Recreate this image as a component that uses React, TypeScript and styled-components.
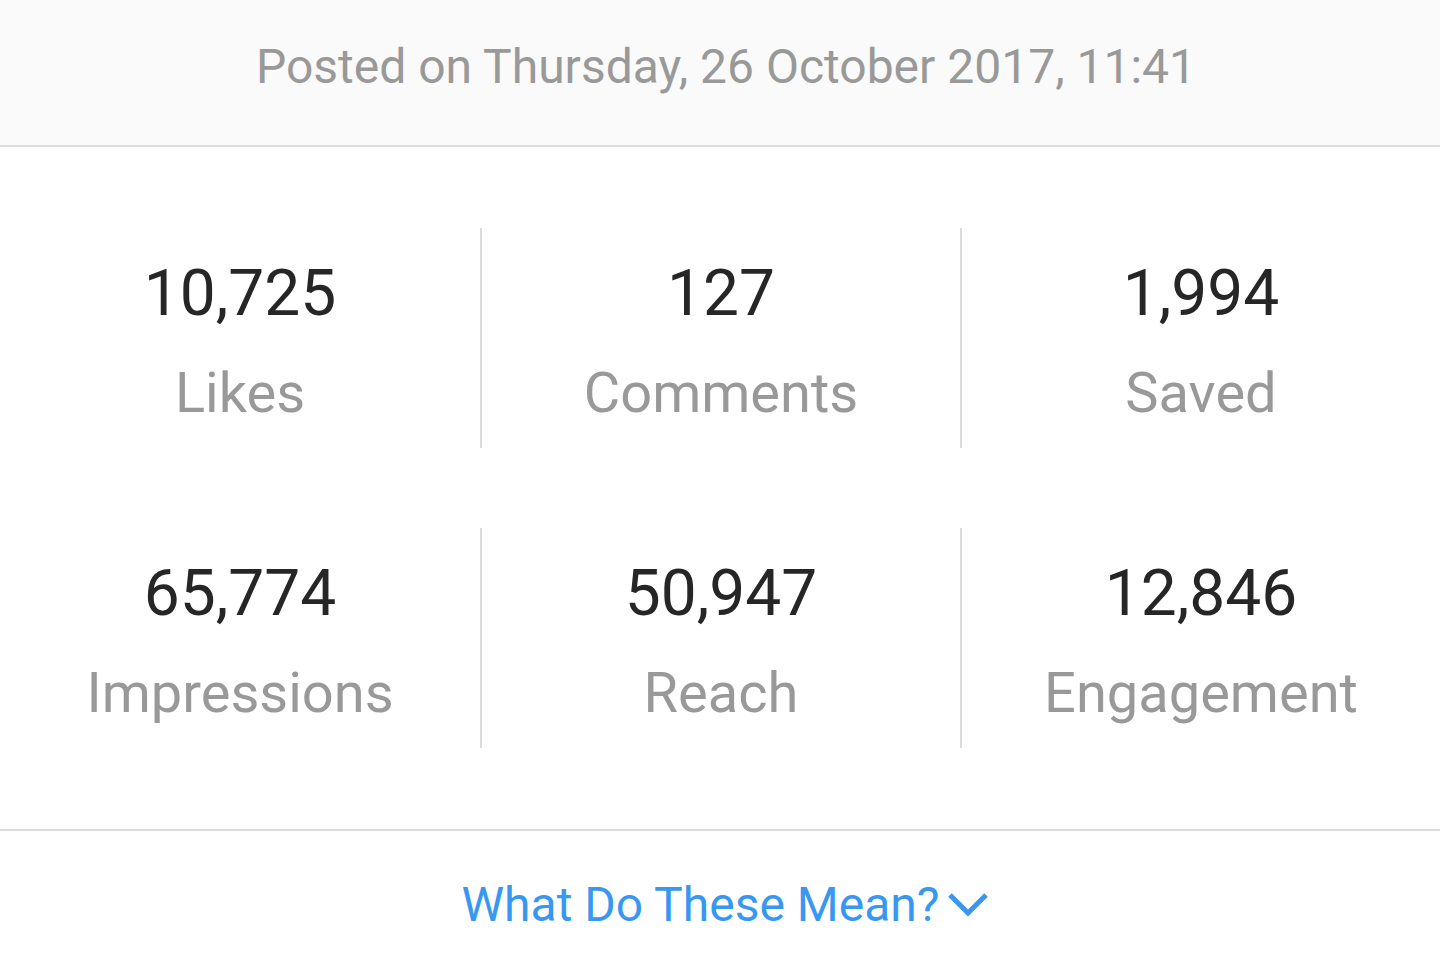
import React from "react";
import styled, { createGlobalStyle } from "styled-components";

const GlobalStyle = createGlobalStyle`
  html, body {
    margin: 0;
    padding: 0;
    background: #fff;
    font-family: Roboto, "Liberation Sans", sans-serif;
  }
`;

const Page = styled.div`
  width: 1440px;
  min-height: 975px;
  background: #fff;
  display: flex;
  flex-direction: column;
`;

const PostedBar = styled.header`
  height: 147px;
  box-sizing: border-box;
  padding: 0 0 12px 12px;
  background: #fafafa;
  border-bottom: 2px solid #dbdbdb;
  display: flex;
  align-items: center;
  justify-content: center;
  font-size: 48px;
  color: #999;
`;

const StatsGrid = styled.section`
  display: grid;
  grid-template-columns: repeat(3, 1fr);
  row-gap: 80px;
  padding: 81px 0;
  border-bottom: 2px solid #dbdbdb;
`;

const StatCell = styled.div<{ $divided?: boolean }>`
  height: 220px;
  box-sizing: border-box;
  padding-top: 34px;
  display: flex;
  flex-direction: column;
  align-items: center;
  border-left: ${(p) => (p.$divided ? "2px solid #dbdbdb" : "none")};
`;

const StatValue = styled.div`
  font-size: 64px;
  line-height: 1;
  color: #262626;
`;

const StatLabel = styled.div`
  margin-top: 39px;
  font-size: 56px;
  line-height: 1;
  color: #999;
`;

const Footer = styled.footer`
  flex: 1;
  display: flex;
  align-items: center;
  justify-content: center;
  padding: 2px 0 0 10px;
`;

const ExplainLink = styled.a`
  display: flex;
  align-items: center;
  gap: 9px;
  font-size: 48px;
  color: #3897f0;
  text-decoration: none;
  cursor: pointer;
`;

const stats = [
  { value: "10,725", label: "Likes" },
  { value: "127", label: "Comments" },
  { value: "1,994", label: "Saved" },
  { value: "65,774", label: "Impressions" },
  { value: "50,947", label: "Reach" },
  { value: "12,846", label: "Engagement" },
];

const Chevron = () => (
  <svg width="40" height="28" viewBox="0 0 40 28" fill="none">
    <path d="M2 5 L20 23 L38 5" stroke="#3897f0" strokeWidth="5" />
  </svg>
);

export default function App() {
  return (
    <Page>
      <GlobalStyle />
      <PostedBar>Posted on Thursday, 26 October 2017, 11:41</PostedBar>
      <StatsGrid>
        {stats.map((s, i) => (
          <StatCell key={s.label} $divided={i % 3 !== 0}>
            <StatValue>{s.value}</StatValue>
            <StatLabel>{s.label}</StatLabel>
          </StatCell>
        ))}
      </StatsGrid>
      <Footer>
        <ExplainLink>
          What Do These Mean?
          <Chevron />
        </ExplainLink>
      </Footer>
    </Page>
  );
}
